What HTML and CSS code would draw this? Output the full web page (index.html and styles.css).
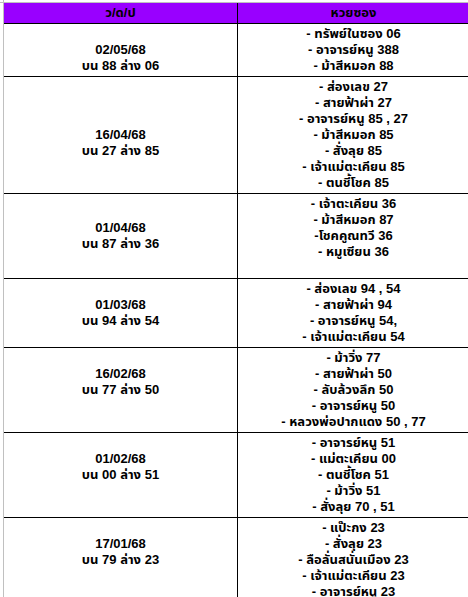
FILE: index.html
```html
<!DOCTYPE html>
<html lang="th">
<head>
<meta charset="utf-8">
<title>หวยซอง</title>
<link rel="stylesheet" href="styles.css">
</head>
<body>
<div class="frame">
<table class="sheet">
<tr class="head"><th class="c1">ว/ด/ป</th><th class="c2">หวยซอง</th></tr>
<tr>
<td class="date"><div>&nbsp;</div><div>02/05/68</div><div>บน 88 ล่าง 06</div></td>
<td class="list"><div>- ทรัพย์ในซอง 06</div><div>- อาจารย์หนู 388</div><div>- ม้าสีหมอก 88</div></td>
</tr>
<tr>
<td class="date"><div>&nbsp;</div><div>16/04/68</div><div>บน 27 ล่าง 85</div></td>
<td class="list"><div>- ส่องเลข 27</div><div>- สายฟ้าผ่า 27</div><div>- อาจารย์หนู 85 , 27</div><div>- ม้าสีหมอก 85</div><div>- สั่งลุย 85</div><div>- เจ้าแม่ตะเคียน 85</div><div>- ตนชี้โชค 85</div></td>
</tr>
<tr>
<td class="date"><div>01/04/68</div><div>บน 87 ล่าง 36</div></td>
<td class="list"><div>- เจ้าตะเคียน 36</div><div>- ม้าสีหมอก 87</div><div>-โชคคูณทวี 36</div><div>- หมูเซียน 36</div><div>&nbsp;</div></td>
</tr>
<tr>
<td class="date"><div>01/03/68</div><div>บน 94 ล่าง 54</div></td>
<td class="list"><div>- ส่องเลข 94 , 54</div><div>- สายฟ้าผ่า 94</div><div>- อาจารย์หนู 54,</div><div>- เจ้าแม่ตะเคียน 54</div></td>
</tr>
<tr>
<td class="date"><div>16/02/68</div><div>บน 77 ล่าง 50</div><div>&nbsp;</div></td>
<td class="list"><div>- ม้าวิ่ง 77</div><div>- สายฟ้าผ่า 50</div><div>- ลับล้วงลึก 50</div><div>- อาจารย์หนู 50</div><div>- หลวงพ่อปากแดง 50 , 77</div></td>
</tr>
<tr>
<td class="date"><div>01/02/68</div><div>บน 00 ล่าง 51</div><div>&nbsp;</div></td>
<td class="list"><div>- อาจารย์หนู 51</div><div>- แม่ตะเคียน 00</div><div>- ตนชี้โชค 51</div><div>- ม้าวิ่ง 51</div><div>- สั่งลุย 70 , 51</div></td>
</tr>
<tr>
<td class="date"><div>17/01/68</div><div>บน 79 ล่าง 23</div><div>&nbsp;</div></td>
<td class="list"><div>- แป๊ะกง 23</div><div>- สั่งลุย 23</div><div>- ลือลั่นสนั่นเมือง 23</div><div>- เจ้าแม่ตะเคียน 23</div><div>- อาจารย์หนู 23</div></td>
</tr>
</table>
</div>
</body>
</html>
```

FILE: styles.css
```css
html, body {
  margin: 0;
  padding: 0;
  background: #ffffff;
  overflow: hidden;
}

.frame {
  min-height: 597px;
  padding: 3px 0 0 4px;
  background:
    linear-gradient(#c0c0c0, #c0c0c0) 0 2px / 100% 1px no-repeat,
    linear-gradient(#c0c0c0, #c0c0c0) 3px 0 / 1px 100% no-repeat;
  font: bold 13px/16px "Liberation Sans", Arial, "Noto Sans Thai", Tahoma, "DejaVu Sans", sans-serif;
  color: #000000;
}

.sheet {
  border-collapse: separate;
  border-spacing: 0;
  table-layout: fixed;
  width: 465px;
}

.sheet th,
.sheet td {
  box-sizing: border-box;
  padding: 2px 0;
  text-align: center;
  vertical-align: middle;
  border-bottom: 1px solid #000000;
  white-space: nowrap;
}

.head th {
  background: #9900ff;
  font-weight: bold;
}

.c1 {
  width: 234px;
  border-right: 1px solid #000000;
}

.c2 {
  width: 231px;
}

.date {
  border-right: 1px solid #000000;
}
```
